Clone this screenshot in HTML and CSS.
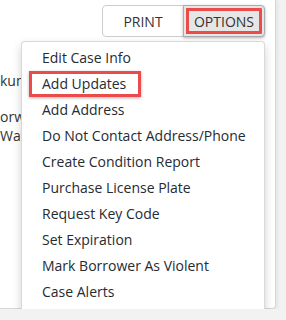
FILE: index.html
```html
<!DOCTYPE html>
<html lang="en">
<head>
  <meta charset="UTF-8">
  <title>Case Options</title>
  <link rel="stylesheet" href="styles.css">
</head>
<body>
  <div class="panel">
    <div class="toolbar">
      <div class="btn-group">
        <button class="btn">PRINT</button>
        <button class="btn active marked">OPTIONS</button>
      </div>
    </div>

    <div class="details">
      <p class="row r1">kumente</p>
      <p class="row r2">orwer</p>
      <p class="row r3">Watch</p>
    </div>

    <ul class="dropdown">
      <li><a href="#">Edit Case Info</a></li>
      <li><a href="#" class="marked">Add Updates</a></li>
      <li><a href="#">Add Address</a></li>
      <li><a href="#">Do Not Contact Address/Phone</a></li>
      <li><a href="#">Create Condition Report</a></li>
      <li><a href="#">Purchase License Plate</a></li>
      <li><a href="#">Request Key Code</a></li>
      <li><a href="#">Set Expiration</a></li>
      <li><a href="#">Mark Borrower As Violent</a></li>
      <li><a href="#">Case Alerts</a></li>
    </ul>
  </div>
</body>
</html>
```

FILE: styles.css
```css
body {
  margin: 0;
  font-family: "Open Sans", Arial, sans-serif;
  font-size: 14px;
  color: #333;
  background-color: #f2f2f2;
}

.panel {
  position: relative;
  width: 275px;
  height: 308px;
  background-color: white;
  border-right: 1px solid #d6d6d6;
  border-bottom: 1px solid #d6d6d6;
  border-bottom-right-radius: 4px;
  box-shadow: 1px 1px 4px rgba(0, 0, 0, 0.08);
}

.toolbar {
  display: flex;
  justify-content: flex-end;
  padding: 5px 10px 0 0;
}

.btn-group {
  display: flex;
}

.btn {
  font-family: inherit;
  font-size: 14px;
  color: #333;
  height: 32px;
  padding: 0;
  background-color: white;
  border: 1px solid #ccc;
  cursor: pointer;
}

.btn:first-child {
  width: 82px;
  border-radius: 4px 0 0 4px;
}

.btn:last-child {
  width: 82px;
  margin-left: -1px;
  border-radius: 0 4px 4px 0;
}

.btn.active {
  background-color: #e6e6e6;
  border-color: #adadad;
}

.marked {
  outline: 3px solid #eb4b4b;
  outline-offset: -3px;
  box-shadow: 0 1px 3px rgba(0, 0, 0, 0.3);
}

.btn.marked {
  outline-offset: -6px;
}

/* text of the page behind the open menu */
.details {
  width: 21px;
  overflow: hidden;
  padding-top: 35px;
}

.row {
  margin: 0;
  line-height: 18px;
  white-space: nowrap;
}

.r2 {
  margin-top: 18px;
}

.r3 {
  margin-top: 1px;
}

.dropdown {
  position: absolute;
  left: 21px;
  top: 41px;
  width: 242px;
  margin: 0;
  padding: 3px 0 7px;
  list-style: none;
  background-color: white;
  border: 1px solid rgba(0, 0, 0, 0.15);
  border-radius: 4px;
  box-shadow: 0 4px 10px rgba(0, 0, 0, 0.18);
}

.dropdown li {
  display: flex;
  height: 26px;
}

.dropdown a {
  display: block;
  padding: 0 8px 0 20px;
  line-height: 26px;
  color: #262a33;
  text-decoration: none;
  white-space: nowrap;
}

.dropdown a.marked {
  margin-left: 7px;
  padding-left: 13px;
  width: 91px;
}
```
